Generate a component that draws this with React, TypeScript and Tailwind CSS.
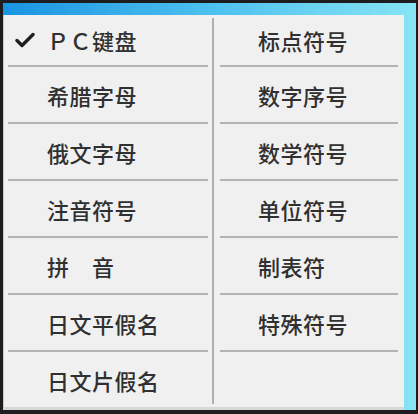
import React from 'react';

const LEFT_ITEMS = ['ＰＣ键盘', '希腊字母', '俄文字母', '注音符号', '拼　音', '日文平假名', '日文片假名'];
const RIGHT_ITEMS = ['标点符号', '数字序号', '数学符号', '单位符号', '制表符', '特殊符号', ''];

function Check() {
  return (
    <svg width="20" height="16" viewBox="0 0 20 16" className="absolute left-[11px] top-1/2 -translate-y-1/2">
      <path d="M2 8.5 L7 13.5 L18 2.5" fill="none" stroke="#1f1f1f" strokeWidth="3.4" strokeLinecap="round" strokeLinejoin="round" />
    </svg>
  );
}

function Column({ items, inset, textLeft, checked }: { items: string[]; inset: string; textLeft: string; checked?: number }) {
  return (
    <div className="flex flex-col h-full">
      {items.map((label, i) => {
        const last = i === items.length - 1;
        return (
          <React.Fragment key={i}>
            <div
              className={`relative flex items-center ${i === 0 ? 'h-[50px]' : last ? 'flex-1' : 'h-[55px]'} ${textLeft}`}
            >
              {checked === i && <Check />}
              <span className="text-[22px] leading-none font-medium tracking-[0.5px] text-[#303030] whitespace-pre">
                {label}
              </span>
            </div>
            {!last && <div className={`h-[2px] bg-[#b3b3b3] ${inset}`} />}
          </React.Fragment>
        );
      })}
    </div>
  );
}

export default function App() {
  return (
    <div
      className="w-[418px] h-[414px] bg-[#1d1d1f] pt-[3px] pl-[3px] pr-[2px] pb-[4px] overflow-hidden"
      style={{ fontFamily: '"Noto Sans CJK SC", "Noto Sans", sans-serif' }}
    >
      <div className="h-full flex flex-col bg-gradient-to-r from-[#1894e2] via-[#4cc0ee] to-[#86e4f4] pt-[12px] pr-[12px]">
        <div className="flex-1 flex bg-[#f0f0f0] border-l border-[#c9c9c9] border-b-[3px] border-b-[#d8d8d8]">
          <div className="w-[208px]">
            <Column items={LEFT_ITEMS} inset="mx-[4px]" textLeft="pl-[43px]" checked={0} />
          </div>
          <div className="w-[2px] my-[3px] bg-[#b0b0b0]" />
          <div className="flex-1">
            <Column items={RIGHT_ITEMS} inset="mx-[6px]" textLeft="pl-[44px]" />
          </div>
        </div>
      </div>
    </div>
  );
}
